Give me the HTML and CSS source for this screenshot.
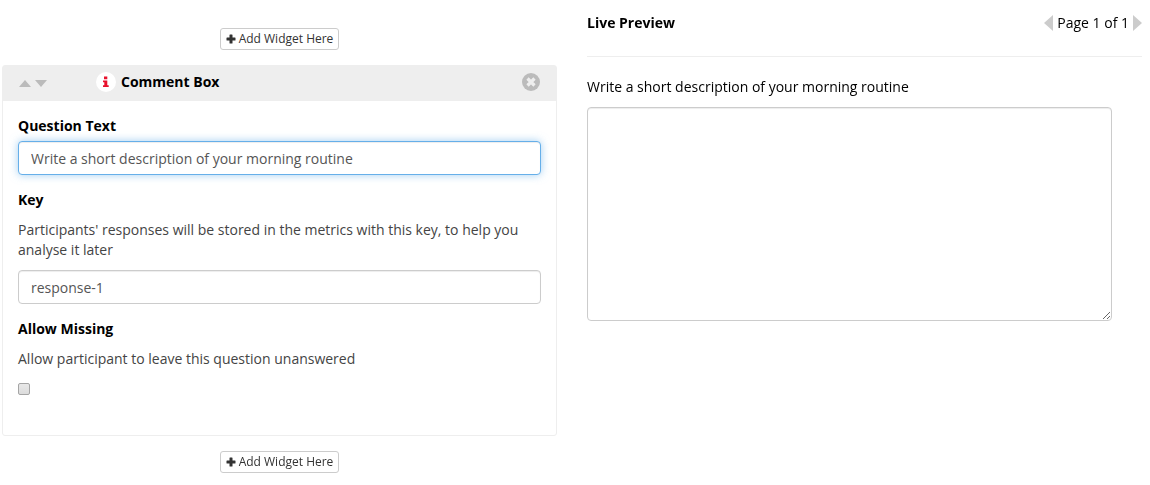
FILE: index.html
```html
<!DOCTYPE html>
<html lang="en">
<head>
    <meta charset="UTF-8">
    <meta name="viewport" content="width=device-width, initial-scale=1.0">
    <title>Questionnaire Editor</title>
    <link rel="stylesheet" href="styles.css">
</head>
<body>
    <div class="editor">
        <div class="widgets">
            <button type="button" class="add-button">
                <svg class="plus-icon" viewBox="0 0 10 10"><path d="M4 .5h2q.5 0 .5.5v2.5H9q.5 0 .5.5v2q0 .5-.5.5H6.5V9q0 .5-.5.5H4q-.5 0-.5-.5V6.500H1Q.5 6.500.5 6V4q0-.5.5-.5h2.500V1q0-.5.5-.5z"/></svg>
                Add Widget Here
            </button>

            <section class="card">
                <div class="card-header">
                    <div class="move-buttons">
                        <button type="button" class="icon-button" aria-label="Move up">
                            <svg width="12" height="7" viewBox="0 0 12 7"><path d="M0 7L6 0l6 7z"/></svg>
                        </button>
                        <button type="button" class="icon-button" aria-label="Move down">
                            <svg width="12" height="7" viewBox="0 0 12 7"><path d="M0 0h12L6 7z"/></svg>
                        </button>
                    </div>
                    <svg class="info-icon" viewBox="0 0 20 20">
                        <circle cx="10" cy="10" r="10" fill="#fff"/>
                        <path d="M8 4.500h3.300v2.800H8zM7 8.500h4.300v4.700h1.400V15H7v-1.800h1.300v-2.900H7z" fill="#e8112d"/>
                    </svg>
                    <h2 class="title">Comment Box</h2>
                    <button type="button" class="icon-button close-button" aria-label="Remove widget">
                        <svg width="18" height="18" viewBox="0 0 18 18">
                            <circle cx="9" cy="9" r="9"/>
                            <path d="M5.500 5.500l7 7M12.500 5.500l-7 7" stroke="#eee" stroke-width="3.200"/>
                        </svg>
                    </button>
                </div>
                <form class="card-body">
                    <div class="field">
                        <label for="questionText">Question Text</label>
                        <input type="text" class="form-control" id="questionText" value="Write a short description of your morning routine" autofocus>
                    </div>
                    <div class="field">
                        <label for="key">Key</label>
                        <p class="help" id="keyHelp">Participants' responses will be stored in the metrics with this key, to help you analyse it later</p>
                        <input type="text" class="form-control" id="key" value="response-1" aria-describedby="keyHelp">
                    </div>
                    <div class="field">
                        <label for="allowMissing">Allow Missing</label>
                        <p class="help" id="missingHelp">Allow participant to leave this question unanswered</p>
                        <input type="checkbox" class="checkbox" id="allowMissing" aria-describedby="missingHelp">
                    </div>
                </form>
            </section>

            <button type="button" class="add-button">
                <svg class="plus-icon" viewBox="0 0 10 10"><path d="M4 .5h2q.5 0 .5.5v2.5H9q.5 0 .5.5v2q0 .5-.5.5H6.5V9q0 .5-.5.5H4q-.5 0-.5-.5V6.500H1Q.5 6.500.5 6V4q0-.5.5-.5h2.500V1q0-.5.5-.5z"/></svg>
                Add Widget Here
            </button>
        </div>

        <div class="preview">
            <div class="preview-header">
                <h2 class="title">Live Preview</h2>
                <div class="pager">
                    <button type="button" class="icon-button" aria-label="Previous page">
                        <svg width="9" height="16" viewBox="0 0 9 16"><path d="M9 0v16L0 8z"/></svg>
                    </button>
                    <span>Page 1 of 1</span>
                    <button type="button" class="icon-button" aria-label="Next page">
                        <svg width="9" height="16" viewBox="0 0 9 16"><path d="M0 0v16l9-8z"/></svg>
                    </button>
                </div>
            </div>
            <div class="preview-body">
                <label class="preview-label" for="answer">Write a short description of your morning routine</label>
                <textarea class="form-control answer" id="answer" rows="10"></textarea>
            </div>
        </div>
    </div>

    <script>
        const questionText = document.getElementById('questionText');
        const previewLabel = document.querySelector('.preview-label');

        questionText.addEventListener('input', () => {
            previewLabel.textContent = questionText.value;
        });

        questionText.focus();
        questionText.setSelectionRange(questionText.value.length, questionText.value.length);
    </script>
</body>
</html>
```
FILE: styles.css
```css
* {
    box-sizing: border-box;
}
body {
    margin: 0;
    font-family: "Open Sans", "Noto Sans", sans-serif;
    font-size: 14px;
    line-height: 20px;
    color: #000;
    background-color: #fff;
}
input, textarea, button {
    font-family: inherit;
    font-size: inherit;
    line-height: inherit;
}
svg {
    display: block;
}
.editor {
    display: grid;
    grid-template-columns: 1fr 1fr;
    gap: 30px;
    padding: 0 8px 12px 2px;
}
.widgets {
    display: flex;
    flex-direction: column;
    align-items: center;
    gap: 15px;
    padding-top: 28px;
}
.add-button {
    display: flex;
    align-items: center;
    gap: 3px;
    padding: 1px 5px;
    font-size: 12px;
    line-height: 18px;
    color: #333;
    background-color: #fff;
    border: 1px solid #ccc;
    border-radius: 3px;
    cursor: pointer;
}
.plus-icon {
    width: 10px;
    height: 10px;
    fill: #333;
}
.card {
    width: 100%;
    border: 1px solid #eee;
    border-radius: 3px;
}
.card-header {
    display: flex;
    align-items: center;
    height: 35px;
    padding: 0 16px 3px;
    background-color: #eee;
}
.move-buttons {
    display: flex;
    gap: 4px;
    width: 77px;
    padding-top: 3px;
}
.icon-button {
    padding: 0;
    background: none;
    border: none;
    fill: #bbb;
    cursor: pointer;
}
.info-icon {
    width: 20px;
    height: 20px;
    margin-right: 5px;
}
.title {
    margin: 0;
    font-size: 14px;
    font-weight: 700;
}
.close-button {
    margin-left: auto;
}
.card-body {
    padding: 15px 15px 40px;
}
.field {
    margin-bottom: 15px;
}
.field:last-child {
    margin-bottom: 0;
}
.field label {
    display: block;
    margin-bottom: 5px;
    font-weight: 700;
}
.help {
    margin: 10px 0;
    color: #444;
}
.form-control {
    display: block;
    width: 100%;
    padding: 7px 12px 5px;
    color: #555;
    background-color: #fff;
    border: 1px solid #ccc;
    border-radius: 4px;
    box-shadow: inset 0 1px 1px rgba(0, 0, 0, 0.075);
}
.form-control:focus {
    border-color: #66afe9;
    outline: 0;
    box-shadow: inset 0 1px 1px rgba(0, 0, 0, 0.075), 0 0 8px rgba(102, 175, 233, 0.6);
}
.checkbox {
    display: block;
    appearance: none;
    width: 12px;
    height: 12px;
    margin: 14px 0 0;
    background-image: linear-gradient(#e8e8e8, #dcdcdc);
    border: 1px solid #a5a5a5;
    border-radius: 2px;
}
.checkbox:checked {
    background: #555;
}
.preview-header {
    display: flex;
    justify-content: space-between;
    padding: 13px 0 23px;
    border-bottom: 1px solid #eee;
}
.pager {
    display: flex;
    align-items: center;
    gap: 4px;
}
.pager .icon-button {
    fill: #ccc;
}
.preview-body {
    padding: 20px 30px 0 0;
}
.preview-label {
    display: block;
    margin-bottom: 10px;
}
.answer {
    resize: vertical;
}
```
